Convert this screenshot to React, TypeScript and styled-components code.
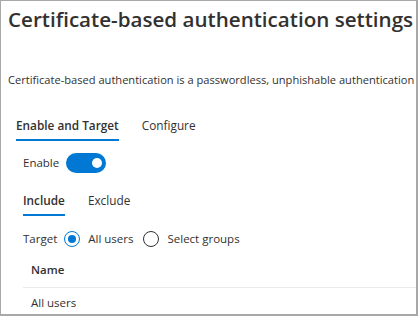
import React from 'react';
import styled, { createGlobalStyle } from 'styled-components';

const GlobalStyle = createGlobalStyle`
  html, body {
    margin: 0;
    padding: 0;
    background: #ffffff;
  }
  body {
    font-family: 'Open Sans', 'Noto Sans', sans-serif;
    color: #323130;
  }
`;

const Frame = styled.div`
  width: 418px;
  height: 316px;
  box-sizing: border-box;
  border: 1px solid #a8a8a8;
  border-right-width: 2px;
  border-bottom-width: 2px;
  overflow: hidden;
  padding: 0 0 0 7px;
`;

const Title = styled.h1`
  margin: 0;
  padding-top: 3px;
  font-size: 20.6px;
  font-weight: 600;
  line-height: 30px;
  white-space: nowrap;
`;

const Description = styled.p`
  margin: 38px 0 0;
  font-size: 11.1px;
  line-height: 16px;
  white-space: nowrap;
`;

const TabRow = styled.div<{ $indent: number; $top: number }>`
  display: flex;
  gap: 23px;
  margin-left: ${(p) => p.$indent}px;
  margin-top: ${(p) => p.$top}px;
`;

const Tab = styled.div<{ $active?: boolean }>`
  font-size: 11.8px;
  line-height: 18px;
  padding: 6px 0 5px;
  font-weight: ${(p) => (p.$active ? 600 : 400)};
  border-bottom: 2px solid ${(p) => (p.$active ? '#0078d4' : 'transparent')};
`;

const Field = styled.div<{ $top: number }>`
  display: flex;
  align-items: center;
  gap: 7px;
  margin-left: 15px;
  margin-top: ${(p) => p.$top}px;
  font-size: 11.5px;
  line-height: 20px;
`;

const Toggle = styled.div<{ $on: boolean }>`
  width: 40px;
  height: 20px;
  border-radius: 10px;
  background: ${(p) => (p.$on ? '#0078d4' : '#ffffff')};
  position: relative;
  &::after {
    content: '';
    position: absolute;
    top: 5px;
    left: ${(p) => (p.$on ? '26px' : '4px')};
    width: 10px;
    height: 10px;
    border-radius: 50%;
    background: #ffffff;
  }
`;

const RadioOption = styled.label`
  display: flex;
  align-items: center;
  gap: 8px;
  margin-right: 3px;
`;

const RadioDot = styled.span<{ $checked?: boolean }>`
  width: 16px;
  height: 16px;
  box-sizing: border-box;
  border-radius: 50%;
  border: 1px solid ${(p) => (p.$checked ? '#0078d4' : '#323130')};
  display: flex;
  align-items: center;
  justify-content: center;
  &::after {
    content: '';
    width: 8px;
    height: 8px;
    border-radius: 50%;
    background: ${(p) => (p.$checked ? '#0078d4' : 'transparent')};
  }
`;

const Table = styled.div`
  margin-left: 15px;
  margin-top: 4px;
`;

const HeaderCell = styled.div`
  font-size: 11.5px;
  font-weight: 600;
  padding: 0 0 0 8px;
  line-height: 34px;
  border-bottom: 1px solid #edebe9;
`;

const Cell = styled.div`
  font-size: 11.5px;
  padding: 0 0 0 8px;
  line-height: 30px;
`;

const App: React.FC = () => {
  return (
    <>
      <GlobalStyle />
      <Frame>
        <Title>Certificate-based authentication settings</Title>
        <Description>
          Certificate-based authentication is a passwordless, unphishable authentication
        </Description>
        <TabRow $indent={8} $top={22}>
          <Tab $active>Enable and Target</Tab>
          <Tab>Configure</Tab>
        </TabRow>
        <Field $top={12}>
          Enable
          <Toggle $on />
        </Field>
        <TabRow $indent={15} $top={12}>
          <Tab $active>Include</Tab>
          <Tab>Exclude</Tab>
        </TabRow>
        <Field $top={13}>
          Target
          <RadioOption>
            <RadioDot $checked />
            All users
          </RadioOption>
          <RadioOption>
            <RadioDot />
            Select groups
          </RadioOption>
        </Field>
        <Table>
          <HeaderCell>Name</HeaderCell>
          <Cell>All users</Cell>
        </Table>
      </Frame>
    </>
  );
};

export default App;
